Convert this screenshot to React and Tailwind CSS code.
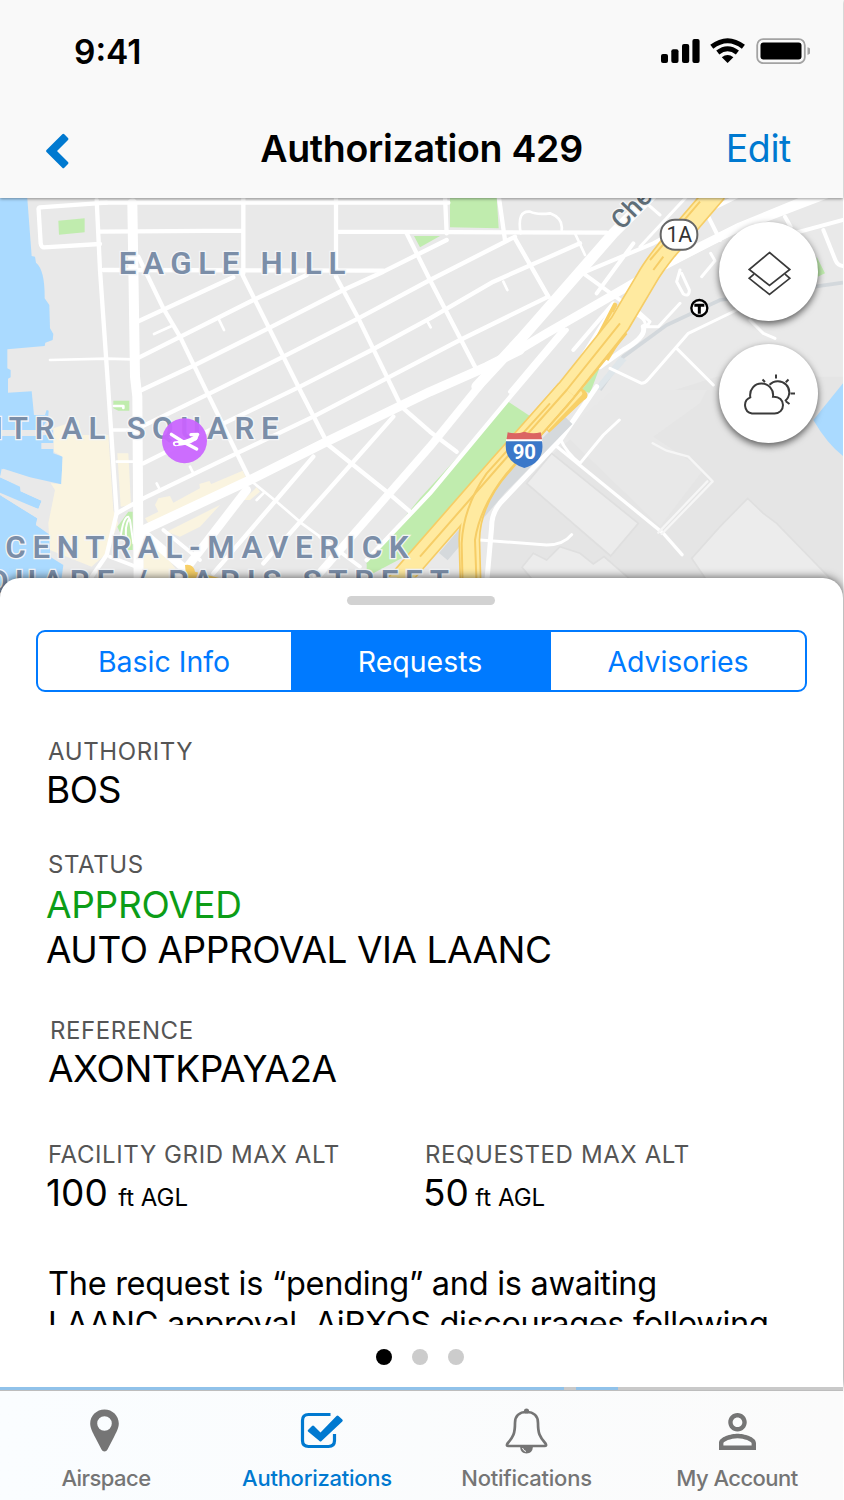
import React from "react";

/* Map canvas: units are a third of a CSS pixel. */
function Roads() {
  return (
    <g fill="none" stroke="#fff" strokeLinejoin="round" strokeLinecap="round">
      <g strokeWidth="13">
        <path d="M320 38L120 52Q114 54 116 62L122 160Q124 172 132 172L300 162" />
        <path d="M290 30L300 240L325 600L350 970L320 1095L275 1160" />
        <path d="M300 38H1345M300 125L730 122M1010 125L1820 128M310 240L1150 242M730 20V250M1008 20V260M1335 20L1340 130" />
        <path d="M412 395L700 262M412 505L760 330L920 255M425 600L585 525L805 415L1030 300L1150 245L1250 195L1340 150" />
        <path d="M425 710L640 605L850 500L1075 385L1290 270L1545 140" />
        <path d="M430 820L640 715L900 590L1115 480L1290 385L1480 275L1740 160" />
        <path d="M350 970L430 925L710 790L940 680L1160 565L1380 450L1645 320" />
        <path d="M415 200L490 355L540 440L620 605L750 870" />
        <path d="M725 250L765 330L900 600L985 765L1060 825L1160 905L1230 965" />
        <path d="M1008 260L1075 385L1180 600L1204 650L1290 725L1370 785" />
        <path d="M1220 130L1290 270L1425 530M1545 145L1645 320M1495 10L1515 150" />
        <path d="M640 1150L940 800M790 1120L1180 680M1100 1110L1290 910L1560 585L1700 420" />
        <path d="M340 720H420M330 1100L420 1135M490 1020L600 1110M960 1040L1080 1130" strokeWidth="11" />
      </g>
      <g strokeWidth="8">
        <path d="M150 510L320 506L400 508M462 432L515 408M655 385L672 420M350 815H410M470 880L480 900M570 830L580 850M750 870L830 935L905 1000L960 1040M770 930L790 910" />
        <path d="M1562 130Q1550 60 1590 65Q1610 75 1650 70Q1690 85 1685 120M1725 130L1755 195M1510 275L1522 300M1280 390L1292 412" />
        <path d="M362 1040Q370 980 385 980M380 1050Q372 1010 388 985M390 990L400 1060" strokeWidth="6" />
        <path d="M342 648H370V654" />
      </g>
      <path d="M397 40L405 560L412 620L416 1180" strokeWidth="30" />
      <path d="M430 1020L750 870L980 755L1290 605L1460 530L1560 480" strokeWidth="28" />
      <path d="M540 1160L740 900M420 1020L570 1150" strokeWidth="26" />
      <path d="M950 1160L1290 770L1440 585" strokeWidth="24" />
      <path d="M1430 590L1560 450L1700 290L1840 130L1960 10" strokeWidth="32" />
      <path d="M1540 490L1640 430L1830 320L2020 210L2220 110L2440 20" strokeWidth="26" />
      <path d="M1980 240L2190 130L2529 0" strokeWidth="14" />
      <g strokeWidth="12">
        <path d="M1745 250L1960 160L2090 90M1750 250L1860 330M1900 160L1790 310M2120 70L2160 150M2140 55L2230 10M2270 160L2529 90M2355 80L2372 110M2470 120L2506 210Q2512 226 2529 228M1720 480L1840 340" />
        <path d="M1530 605L1690 415M1740 510L1840 350" />
      </g>
      <g strokeWidth="9">
        <path d="M1920 170L2060 20M1940 40L1980 75M2105 260L2145 212L2132 190M2040 240L2030 275L2050 312Q2068 322 2068 300L2045 250M1900 370Q1950 390 1930 420M1910 360L1950 395L1940 410H1975L2040 340" />
        <path d="M1830 535L1925 580Q1935 580 1945 568L2065 430L2210 360M2030 475L2140 585M2250 390L2290 430L2325 445" />
      </g>
      <path d="M1800 530L1870 480Q1940 440 1930 410M1790 590L1680 750L1500 940Q1475 970 1475 1010L1460 1180" strokeWidth="15" />
      <path d="M1665 765L1990 1030L2046 1094" strokeWidth="10" />
      <path d="M1680 745Q1700 790 1740 820L1810 735L1858 690M1440 1050L1640 1065Q1690 1065 1715 1034" strokeWidth="9" />
      <path d="M1958 760L2000 782L2065 800L2138 874L1985 1032M2122 874L1975 1028" strokeWidth="7" stroke="#f6f6f6" />
    </g>
  );
}

function Highway() {
  const main = "M2150 5L2000 180Q1960 230 1940 265L1860 400L1700 600";
  const west = "M1700 600L1500 825L1190 1180";
  const east = "M1700 600L1510 820Q1410 930 1408 1050L1412 1190";
  return (
    <g fill="none" strokeLinejoin="round">
      <path d="M1705 690L1500 900L1330 1100" stroke="#d5d9dc" strokeWidth="34" />
      <path d="M1845 345L1775 480L1710 570" stroke="#f8d067" strokeWidth="14" strokeLinecap="round" />
      <path d="M1845 370L1780 490" stroke="#ffeaa0" strokeWidth="16" />
      <path d="M1893 390L1820 510" stroke="#f8d067" strokeWidth="12" />
      <path d="M1690 620L1740 605Q1760 615 1745 622L1640 720" stroke="#f8d067" strokeWidth="22" />
      <path d="M1690 620L1740 610L1640 715" stroke="#ffeaa0" strokeWidth="14" />
      {[main, west, east].map((d) => (
        <path key={"edge" + d} d={d} stroke="#f6cd66" strokeWidth="66" />
      ))}
      {[main, west, east].map((d) => (
        <path key={"fill" + d} d={d} stroke="#ffeaa0" strokeWidth="56" />
      ))}
      <path d="M1860 400L1700 600L1500 825L1260 1100M1880 430L1700 650L1520 850Q1440 950 1425 1050L1430 1190M2100 35L1950 210M1990 200L1960 240" stroke="#f6cd66" strokeWidth="6" />
      <path d="M1650 640L1460 850Q1390 950 1385 1060L1388 1190" stroke="#f6cd66" strokeWidth="6" />
    </g>
  );
}

function MapView() {
  return (
    <svg className="block h-[402px] w-[843px]" viewBox="0 24 2529 1206" preserveAspectRatio="none">
      <rect x="0" y="0" width="2529" height="1230" fill="#e9e9e9" />
      <path d="M1660 790L1830 650L1960 620L2150 560H2529V1230H1450L1480 960Z" fill="#e5e5e5" />
      <path d="M1960 740L2100 640L2120 600L1840 600L1690 730L1980 1010L2110 840Z" fill="#e8e8e8" />
      <g fill="#ececec" stroke="#dfdfdf" strokeWidth="5">
        <path d="M1655 790L1580 880L1832 1098L1915 1000Z" />
        <path d="M2243 925L2290 970L2330 1000L2500 1175V1230H2160L2075 1105L2160 1010Z" />
        <path d="M1566 1132L1600 1090L1640 1110L1680 1070L1740 1090L1780 1122L1812 1100L1950 1220H1640Z" />
      </g>
      <g fill="#aadaff">
        <path d="M0 0H80L95 198L105 200L108 218Q135 240 134 325L148 345L150 415L160 432L158 450L136 458L134 468L22 478V535L32 540V562L24 566V608L95 604L102 675L135 675L140 660L146 662L144 690L120 720H0Z" />
        <path d="M0 735L90 738L160 720V790L188 800L184 883L90 862L10 836L0 862L60 890L62 904L125 932L115 957L0 915L112 985L108 1005L150 1035V1100L190 1125L180 1200H0Z" />
        <path d="M2440 690L2529 580V798Q2480 760 2440 690Z" />
      </g>
      <path d="M0 720H120L160 730L120 738H0Z" fill="#e9e9e9" />
      <path d="M0 729H122M124 768H162" stroke="#e9e9e9" strokeWidth="18" />
      <path d="M5 836L90 868L152 884V1032L108 1005L112 985L0 915V908L115 957L125 932L62 904V888L0 862Z" fill="#e9e9e9" />
      <g fill="#faf4e0">
        <path d="M160 715L235 690L245 735H325L340 960L355 1000L320 1090L275 1130L150 1080L145 1000L165 900L152 880L184 883L188 800L162 785Z" />
        <path d="M352 790H385L393 945L362 950Z" />
        <path d="M435 985L475 965L465 945L475 925L510 918L520 938L600 895L598 882L628 873L634 882L728 842L738 862L445 1000Z" />
        <path d="M500 1025L660 945L600 1010L540 1040ZM730 930L770 892L780 905L750 930ZM430 1180V1060L480 1075L560 1180Z" />
      </g>
      <g fill="#c0ecae">
        <path d="M175 92L254 85V127L177 134ZM340 632H388V662H355L340 655Z" />
        <path d="M1242 138H1320L1260 172ZM1350 20H1490L1496 115L1350 112Z" />
        <path d="M1525 635L1600 685L1545 760L1290 1060L1100 1160V1120L1260 925Z" />
        <path d="M352 1010L385 965H398V1080H385ZM1745 600L1800 530L1770 610ZM2450 200L2475 250L2450 262Z" />
      </g>
      <path d="M1800 600L1870 500L2000 405L2160 330L2529 278" fill="none" stroke="#d3d8dc" strokeWidth="11" />
      <path d="M1780 600L1860 500L1880 510L1800 600Z" fill="#dfe6ea" />
      <Roads />
      <Highway />
      <path d="M555 1125Q580 1120 585 1145L660 1165V1180H560Z" fill="#f8d067" />

      <g fontFamily="Roboto, sans-serif" fontWeight="600" fontSize="94" fill="#7b8ea8" stroke="#f3f5f7" strokeWidth="8" paintOrder="stroke">
        <text x="356" y="252" textLength="680">EAGLE HILL</text>
        <text x="-212" y="748" textLength="1048">CENTRAL SQUARE</text>
        <text x="16" y="1103" textLength="1210">CENTRAL-MAVERICK</text>
        <text x="-116" y="1207" textLength="1463">SQUARE / PARIS STREET</text>
      </g>
      <text transform="translate(1866 122) rotate(-46)" fontFamily="Roboto, sans-serif" fontSize="78" fontWeight="500" fill="#5f6e78" stroke="#f5f5f5" strokeWidth="8" paintOrder="stroke">Chelsea</text>

      <rect x="1982" y="89" width="110" height="90" rx="43" fill="#fff" stroke="#666" strokeWidth="6" />
      <text x="2038" y="157" textAnchor="middle" fontFamily="Roboto, sans-serif" fontSize="64" fill="#333">1A</text>

      <circle cx="2098" cy="354" r="24" fill="#fff" stroke="#000" strokeWidth="7" />
      <path d="M2083 346H2113M2098 346V371" stroke="#000" strokeWidth="9" fill="none" />

      <path d="M1523 727Q1550 733 1573 725Q1596 733 1622 727L1627 752H1519Z" fill="#db6462" />
      <path d="M1518 748H1627V755H1518Z" fill="#fff" />
      <path d="M1518 754H1626Q1636 815 1573 834Q1510 815 1518 754Z" fill="#3b78c9" />
      <text x="1573" y="808" textAnchor="middle" fontFamily="Roboto, sans-serif" fontSize="61" fontWeight="700" fill="#fff">90</text>

      <circle cx="553.5" cy="752" r="67.5" fill="#c963ff" fillOpacity="0.93" />
      <g fill="none" stroke="#fff" strokeLinejoin="round" strokeLinecap="round">
        <path d="M514 733L550 756L590 777" strokeWidth="10" />
        <path d="M526 761Q562 760 585 744" strokeWidth="15" />
        <path d="M573 734L593 733L586 746" strokeWidth="10" />
      </g>
      <ellipse cx="530" cy="762" rx="6" ry="3.5" fill="#c963ff" />
    </svg>
  );
}

function StatusIcons() {
  return (
    <svg className="h-[26px] w-[150px]" viewBox="0 0 150 26">
      <g fill="#000">
        <rect x="1" y="16" width="7" height="9" rx="2" />
        <rect x="11.3" y="11.3" width="7.2" height="13.7" rx="2" />
        <rect x="22" y="6" width="7.2" height="19" rx="2" />
        <rect x="32.4" y="1" width="7.2" height="24" rx="2" />
      </g>
      <g fill="none" stroke="#000" strokeWidth="5">
        <path d="M51.8 8.8Q67.6 -3.4 83.4 8.8" />
        <path d="M57.8 14.6Q67.6 7 77.4 14.6" />
      </g>
      <path d="M61.8 19.2Q67.6 15 73.4 19.2L67.6 25Z" />
      <rect x="97.2" y="1.2" width="47.6" height="24" rx="6" fill="none" stroke="#a3a3a3" strokeWidth="1.8" />
      <rect x="100.5" y="4.5" width="41" height="17" rx="3" />
      <path d="M147.5 9.2Q151 10.3 151 13Q151 15.700 147.500 17Z" fill="#a3a3a3" />
    </svg>
  );
}

function MapButton({ children }) {
  return (
    <button className="flex size-[99px] items-center justify-center rounded-full bg-white shadow-[0_3px_7px_rgba(0,0,0,0.6)]">
      {children}
    </button>
  );
}

const LayersIcon = () => (
  <svg className="size-[48px]" viewBox="0 0 48 48" fill="none" stroke="#3a3a3a" strokeWidth="1.7">
    <path d="M24.500 4.500L44.800 21.500L24.500 37.500L4.200 21.500Z" />
    <path d="M9 26.200L4.200 30.300L24.500 46.500L44.800 30.300L40 26.200" />
  </svg>
);

const WeatherIcon = () => (
  <svg className="h-[48px] w-[56px]" viewBox="0 0 56 48" fill="none" stroke="#3a3a3a" strokeWidth="2">
    <path d="M11 43.500A8.500 8.500 0 0 1 9.300 27.300C8 19 14 13.500 20.300 13.500C27.500 13.500 33 19.500 32 26.700C38.500 26.300 42 30.500 42 35C42 40 38.500 43.500 33.500 43.500Z" />
    <path d="M28.500 14.800C33 10 40.500 10 45 14.500C49.500 19 49.500 26.500 44 31M35 4.500V8.500M47.500 9.500L44.800 12.200M21.500 9.500L24 12M49.500 23.500H54M44.800 31.200L48.500 34" />
  </svg>
);

function Field({ label, children, className = "", labelClass = "" }) {
  return (
    <div className={"flex flex-col " + className}>
      <span className={"ml-px h-[31px] text-[24px] leading-[32px] tracking-[0.6px] whitespace-nowrap text-[#555] " + labelClass}>{label}</span>
      {children}
    </div>
  );
}

const value = "block h-[45px] text-[37px] leading-[45px] whitespace-nowrap";

function TabItem({ label, active, width, children, tracking }) {
  return (
    <div className={"flex flex-col items-center " + width + (active ? " text-[#0079d0]" : " text-[#757575]")}>
      <div className="flex h-[72px] items-center justify-center pt-[7px]">{children}</div>
      <span className={"text-[22px] leading-[31px] font-medium whitespace-nowrap " + tracking}>{label}</span>
    </div>
  );
}

export default function App() {
  return (
    <div className="flex h-[1500px] w-[844px] flex-col overflow-hidden bg-white font-['Inter',sans-serif] text-black">
      <header className="relative z-10 h-[198px] w-[843px] shrink-0 bg-[#f9f9f9] shadow-[0_1px_3px_rgba(0,0,0,0.4)]">
        <div className="flex h-[102px] items-center justify-between pr-[33px] pl-[74px]">
          <span className="pt-[2px] text-[33.500px] font-semibold">9:41</span>
          <StatusIcons />
        </div>
        <div className="grid h-[94px] grid-cols-[1fr_auto_1fr] items-center pr-[52px] pl-[45px]">
          <svg className="mt-[4px] h-[36px] w-[24px]" viewBox="0 0 24 36" fill="#0079d0">
            <path d="M17.300 1.300Q18.300 0.300 19.300 1.300L23 5Q24 6 23 7L12 18L23 29Q24 30 23 31L19.300 34.700Q18.300 35.700 17.300 34.700L1.500 19Q0.500 18 1.500 17Z" />
          </svg>
          <h1 className="ml-[7px] text-[37.500px] font-semibold tracking-[-0.3px] whitespace-nowrap">Authorization 429</h1>
          <a className="justify-self-end text-[37.500px] tracking-[-0.4px] text-[#0079d0]">Edit</a>
        </div>
      </header>

      <div className="relative h-[402px] w-[843px] shrink-0 overflow-hidden">
        <MapView />
        <div className="absolute top-[24px] right-[25px] flex flex-col gap-[23px]">
          <MapButton><LayersIcon /></MapButton>
          <MapButton><WeatherIcon /></MapButton>
        </div>
      </div>

      <main className="relative -mt-[22px] flex h-[809px] w-[843px] shrink-0 flex-col rounded-t-[20px] bg-white pt-[18px] shadow-[0_-1px_8px_rgba(0,0,0,0.55)]">
        <div className="ml-[347px] h-[9px] w-[148px] rounded-full bg-[#d2d2d2]" />
        <div className="mt-[25px] ml-[36px] flex h-[62px] w-[771px] overflow-hidden rounded-[9px] border-2 border-[#007aff] text-[28.500px] text-[#007aff]">
          <button className="w-[253px] pt-[3px] pr-px">Basic Info</button>
          <button className="w-[260px] bg-[#007aff] pt-[3px] pr-[2px] text-white">Requests</button>
          <button className="flex-1 pt-[3px] tracking-[-0.1px]">Advisories</button>
        </div>

        <section className="mt-[43.500px] h-[589px] overflow-hidden pl-[46px]">
          <Field label="AUTHORITY" labelClass="pl-px">
            <span className={value + " tracking-[-0.4px]"}>BOS</span>
          </Field>
          <Field label="STATUS" className="mt-[37px]" labelClass="pl-px">
            <span className={value + " mt-[2px] tracking-[-0.3px] text-[#0c9d17]"}>APPROVED</span>
            <span className={value + " tracking-[-0.460px]"}>AUTO APPROVAL VIA LAANC</span>
          </Field>
          <Field label="REFERENCE" className="mt-[43px]" labelClass="pl-[3px]">
            <span className={value + " pl-[2px] tracking-[-0.460px]"}>AXONTKPAYA2A</span>
          </Field>
          <div className="mt-[48px] flex">
            <Field label="FACILITY GRID MAX ALT" className="w-[377px]" labelClass="pl-px tracking-[0.5px]">
              <span className={value}>100 <span className="text-[24px]">ft AGL</span></span>
            </Field>
            <Field label="REQUESTED MAX ALT" labelClass="pl-px">
              <span className={value}>50 <span className="-ml-[4px] text-[24px]">ft AGL</span></span>
            </Field>
          </div>
          <p className="mt-[49px] ml-[2px] text-[32.500px] leading-[40px] tracking-[-0.28px] whitespace-nowrap">
            The request is “pending” and is awaiting
            <br />
            <span className="tracking-[-0.360px]">LAANC approval. AiRXOS discourages following</span>
          </p>
        </section>

        <div className="mt-[24.500px] ml-[375.500px] flex gap-[20px]">
          <span className="size-[16px] rounded-full bg-black" />
          <span className="size-[16px] rounded-full bg-[#ccc]" />
          <span className="size-[16px] rounded-full bg-[#ccc]" />
        </div>
      </main>

      <div className="relative flex h-[3px] w-[843px] shrink-0 bg-[#c9c9c9]">
        <div className="mr-[12px] w-[564px] bg-[#90c2ea]" />
        <div className="w-[42px] bg-[#90c2ea]" />
      </div>
      <nav className="relative flex h-[110px] w-[843px] shrink-0 border-t border-[#bdbdbd] bg-linear-to-r from-[#fafdff] to-[#fbfbfb]">
        <TabItem label="Airspace" width="w-[212px]" tracking="tracking-[-0.550px]">
          <svg className="mr-[4px] h-[43px] w-[29px]" viewBox="0 0 29 43" fill="currentColor">
            <path fillRule="evenodd" d="M14.500 0.500C22.500 0.500 28.800 6.800 28.800 14.500C28.800 19 26 24 24 28L17.500 40.500Q16.500 42.500 14.500 42.500Q12.500 42.500 11.500 40.500L5 28C3 24 0.200 19 0.200 14.500C0.200 6.800 6.500 0.500 14.500 0.500ZM14.500 7.200A7.300 7.300 0 1 0 14.500 21.800A7.300 7.300 0 1 0 14.500 7.200Z" />
          </svg>
        </TabItem>
        <TabItem label="Authorizations" active width="w-[210px]" tracking="tracking-[-0.250px]">
          <svg className="ml-[9px] h-[38px] w-[44px]" viewBox="0 0 44 38">
            <path d="M31.500 2.500H9.500Q3.500 2.500 3.500 8.500V28.500Q3.500 34.500 9.500 34.500H29.500Q35.500 34.500 35.500 28.500V22" transform="translate(-1 0)" fill="none" stroke="currentColor" strokeWidth="3.200" />
            <path d="M8 18L12 14Q13 13 14 14L20.500 20.500L36.500 4Q37.500 3 38.500 4L42.300 7.500Q43.300 8.500 42.300 9.500L21.500 29Q20.500 30 19.500 29L8 19.500Q7.300 18.800 8 18Z" fill="currentColor" />
          </svg>
        </TabItem>
        <TabItem label="Notifications" width="w-[209px]" tracking="tracking-[-0.250px]">
          <svg className="h-[46px] w-[43px]" viewBox="0 0 43 46">
            <path d="M21.500 4C29 4 33 8.500 33 15C33 25 34.500 29 40.500 35.500Q42 38 39.500 38H3.500Q1 38 2.500 35.500C8.500 29 10 25 10 15C10 8.500 14 4 21.500 4Z" fill="none" stroke="currentColor" strokeWidth="2.700" />
            <circle cx="21.500" cy="3" r="2.600" fill="currentColor" />
            <path d="M15 38.500H28Q27.500 45.500 21.500 45.500Q15.500 45.500 15 38.500Z" fill="currentColor" />
            <path d="M17.500 40Q18.500 43 21 43.500" fill="none" stroke="#fff" strokeWidth="1" />
          </svg>
        </TabItem>
        <TabItem label="My Account" width="w-[212px]" tracking="tracking-[-0.550px]">
          <svg className="mt-[2px] size-[37px]" viewBox="4 4 16 16" fill="currentColor">
            <path d="M12 5.900c1.160 0 2.100.94 2.100 2.100s-.94 2.100-2.100 2.100S9.900 9.160 9.900 8s.94-2.100 2.100-2.100m0 9c2.970 0 6.100 1.460 6.100 2.100v1.100H5.900V17c0-.64 3.130-2.100 6.100-2.100M12 4C9.790 4 8 5.790 8 8s1.790 4 4 4 4-1.790 4-4-1.790-4-4-4zm0 9c-2.670 0-8 1.340-8 4v3h16v-3c0-2.660-5.330-4-8-4z" />
          </svg>
        </TabItem>
      </nav>
    </div>
  );
}
